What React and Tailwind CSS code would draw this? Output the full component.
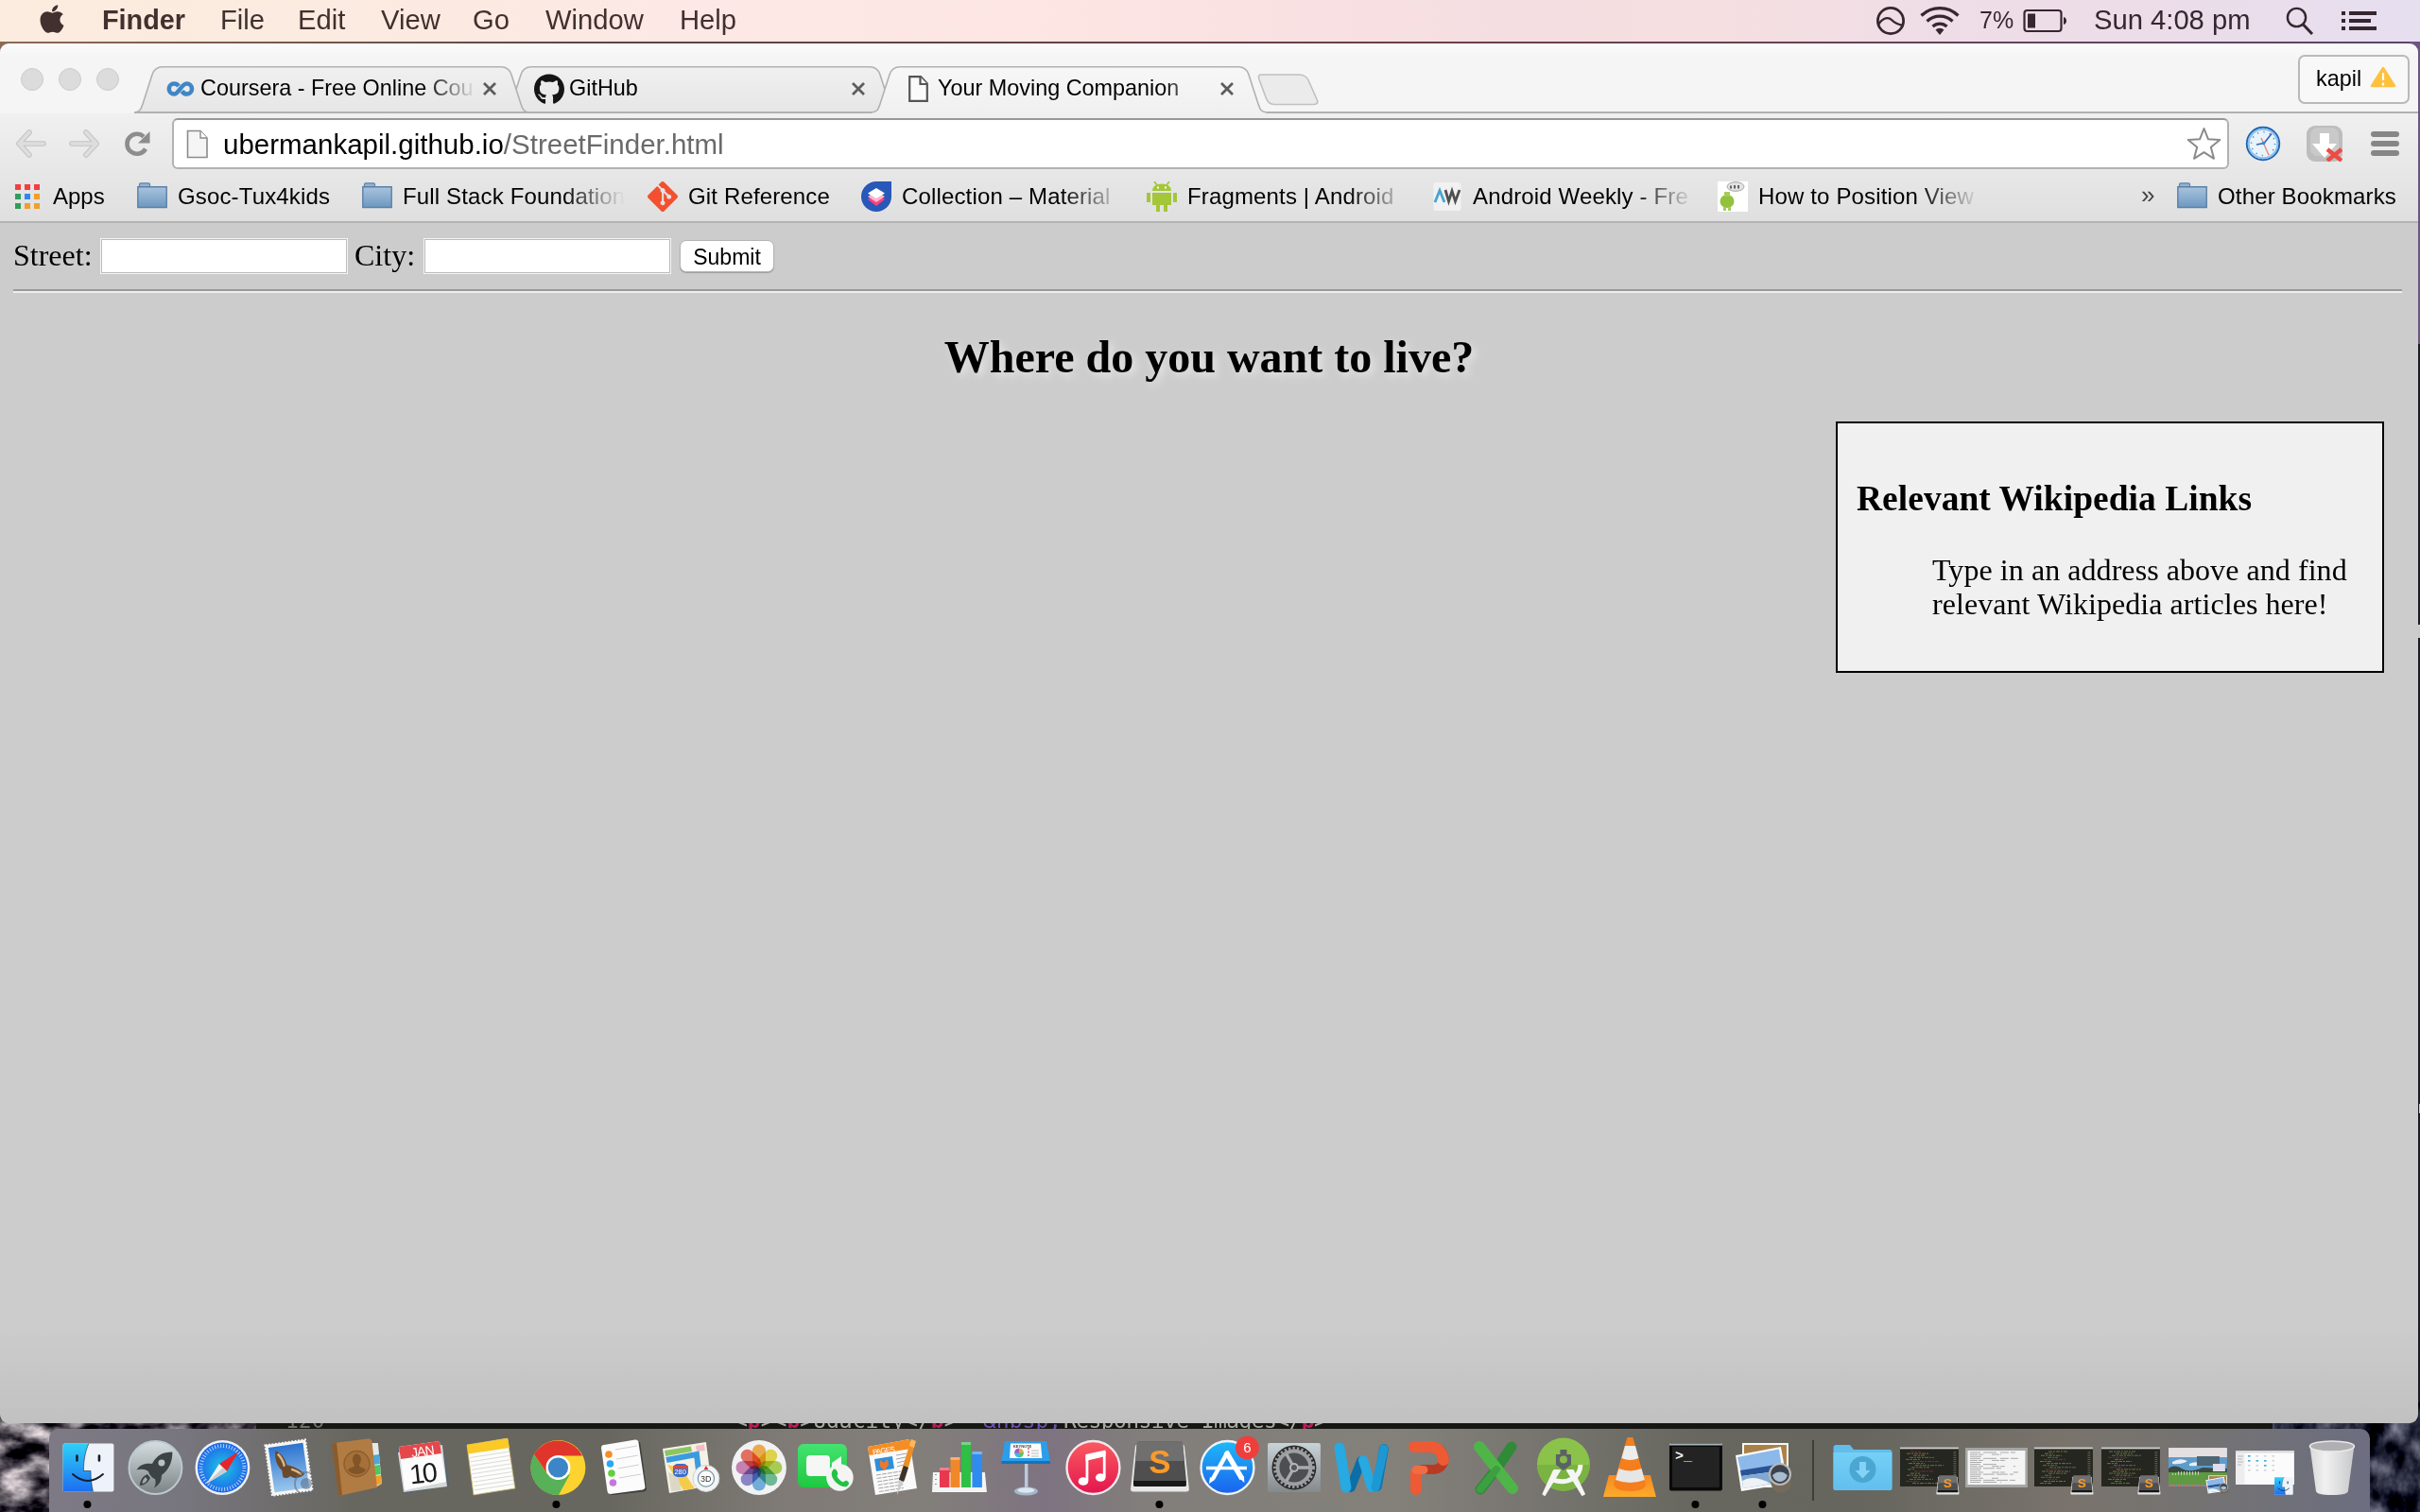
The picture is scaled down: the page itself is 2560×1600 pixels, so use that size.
import React from "react";
import { FaApple, FaGithub } from "react-icons/fa";
import { SiGit } from "react-icons/si";

/* ---------- Menu bar ---------- */

function MenuBar() {
  return (
    <header className="flex h-[44px] shrink-0 items-center bg-[linear-gradient(90deg,#fbecdf_0%,#fcebe0_14%,#fde8e6_30%,#fde6e3_42%,#f9e0e2_54%,#f4dee1_64%,#f6dfe0_70%,#efdde6_80%,#ebdde9_90%,#e6dff0_100%)] text-[29.2px] text-[#42302e]">
      <FaApple className="mb-[4px] ml-[39px] h-[34px] w-[32px] shrink-0" />
      <span className="ml-[37px] w-[125px] shrink-0 text-[28.8px] font-bold">Finder</span>
      <span className="w-[82px] shrink-0">File</span>
      <span className="w-[88px] shrink-0">Edit</span>
      <span className="w-[97px] shrink-0">View</span>
      <span className="w-[77px] shrink-0">Go</span>
      <span className="w-[142px] shrink-0">Window</span>
      <span className="shrink-0">Help</span>
      <div className="mr-[46px] ml-auto flex items-center text-[#35262f]">
        <svg className="h-[32px] w-[32px]" viewBox="0 0 32 32" fill="none" stroke="currentColor">
          <circle cx="16" cy="16" r="13.6" strokeWidth="2.8" />
          <path d="M3 20C8 12 14 12 17 15C21 19 24 20 29 21" strokeWidth="2.4" />
        </svg>
        <svg className="ml-[14px] h-[32px] w-[44px]" viewBox="0 0 44 32" fill="none" stroke="currentColor" strokeWidth="3.2">
          <path d="M2.5 10.5a28 28 0 0 1 39 0" />
          <path d="M8.5 16.5a19.5 19.5 0 0 1 27 0" />
          <path d="M14.5 22a11 11 0 0 1 15 0" />
          <path d="M22 31l-4.5-5.5a7 7 0 0 1 9 0z" fill="currentColor" stroke="none" />
        </svg>
        <span className="ml-[20px] w-[38px] text-[25px]">7%</span>
        <svg className="ml-[8px] h-[26px] w-[48px]" viewBox="0 0 48 26">
          <rect x="1.5" y="2" width="39" height="22" rx="3" fill="none" stroke="currentColor" strokeWidth="2.2" />
          <rect x="5" y="5.5" width="8" height="15" fill="currentColor" />
          <path d="M43 9c4 1 4 7 0 8z" fill="currentColor" />
        </svg>
        <span className="ml-[27px] w-[167px] whitespace-nowrap">Sun 4:08 pm</span>
        <svg className="ml-[36px] h-[30px] w-[30px]" viewBox="0 0 30 30" fill="none" stroke="currentColor" strokeWidth="2.4">
          <circle cx="11.5" cy="11.5" r="9.6" />
          <path d="M18 18.5l10 10.5" strokeWidth="3" />
        </svg>
        <svg className="ml-[29px] h-[22px] w-[37px]" viewBox="0 0 37 22" fill="currentColor">
          <path d="M0 1h4v4H0zM8 1h29v4H8zM0 9h4v4H0zM8 9h23v4H8zM0 17h4v4H0zM8 17h29v4H8z" />
        </svg>
      </div>
    </header>
  );
}

/* ---------- Browser chrome ---------- */

const TAB_LINE =
  "M0 49C6 48.500 7 46 9 40L19 9C21 3 24 .8 30 .8H388C394 .8 397 3 399 9L409 40C411 46 412 48.500 418 49";

function Tab({ active, z, icon, label }) {
  return (
    <div className={"relative -ml-[28px] flex h-[50px] w-[418px] shrink-0 items-center pb-[2px] pl-[33px] " + z}>
      <svg className="absolute inset-0 h-[50px] w-[418px]" viewBox="0 0 418 50">
        <defs>
          <linearGradient id={active ? "tabOn" : "tabOff"} x1="0" y1="0" x2="0" y2="1">
            <stop offset="0" stopColor={active ? "#f7f7f7" : "#f0f0f0"} />
            <stop offset="1" stopColor={active ? "#f0f0f0" : "#e6e6e6"} />
          </linearGradient>
        </defs>
        <path d={TAB_LINE + (active ? "V50H0Z" : "Z")} fill={active ? "url(#tabOn)" : "url(#tabOff)"} />
        <path d={TAB_LINE} fill="none" stroke="#b1b1b1" strokeWidth="1.6" />
        {!active && <path d="M0 49H418" stroke="#b1b1b1" strokeWidth="2" />}
      </svg>
      <div className="relative flex h-[32px] w-[32px] items-center justify-center">{icon}</div>
      <span className="relative ml-[5px] w-[292px] overflow-hidden whitespace-nowrap [mask-image:linear-gradient(90deg,#000_81%,transparent_100%)]">
        {label}
      </span>
      <svg className="relative ml-[7px] h-[14px] w-[14px]" viewBox="0 0 14 14" stroke="#5c5c5c" strokeWidth="2.8">
        <path d="M1 1L13 13M13 1L1 13" />
      </svg>
    </div>
  );
}

function CourseraIcon() {
  return (
    <svg className="h-[16px] w-[30px]" viewBox="0 0 30 16" fill="none" stroke="#3f86c6" strokeWidth="4.6">
      <path d="M13 5C11.500 3 10 2.500 8.300 2.500a5.500 5.500 0 0 0 0 11C13 13.500 16 2.500 21.500 2.500a5.500 5.500 0 0 1 0 11C19.500 13.500 18 12.500 16.500 10.500" />
    </svg>
  );
}

function PageIcon() {
  return (
    <svg className="h-[28px] w-[21px]" viewBox="0 0 21 28" fill="#fafafa" stroke="#555" strokeWidth="2.2">
      <path d="M1.200 1.200H13L19.800 8.500V26.800H1.200Z" />
      <path d="M12.500 1.200V9H19.800" />
    </svg>
  );
}

function TabStrip() {
  return (
    <div className="flex h-[74px] shrink-0 items-end rounded-t-[9px] bg-[linear-gradient(#fbfbfb,#f5f5f5_20%)] text-[23.4px]">
      <div className="mb-[24px] ml-[22px] flex gap-[16px]">
        <i className="h-[24px] w-[24px] rounded-full border border-[#cbcbcb] bg-[#dcdcdc]" />
        <i className="h-[24px] w-[24px] rounded-full border border-[#cbcbcb] bg-[#dcdcdc]" />
        <i className="h-[24px] w-[24px] rounded-full border border-[#cbcbcb] bg-[#dcdcdc]" />
      </div>
      <div className="ml-[16px] flex grow border-b-0 bg-[linear-gradient(#b1b1b1,#b1b1b1)] bg-[length:100%_2px] bg-[position:0_48px] bg-no-repeat pl-[28px]">
        <Tab z="z-20" icon={<CourseraIcon />} label="Coursera - Free Online Cou" />
        <Tab z="z-10" icon={<FaGithub className="h-[33px] w-[33px] text-[#151515]" />} label="GitHub" />
        <Tab active z="z-30" icon={<PageIcon />} label="Your Moving Companion" />
        <svg className="mt-[8px] -ml-[10px] h-[34px] w-[66px]" viewBox="0 0 66 34">
          <path d="M4 1H44C50 1 53 3 55 9L63 27C65 31 63 32.500 59 32.500H18C13 32.500 11 30 9 25L2 6C1 3 1 1 4 1Z" fill="#ebebeb" stroke="#c0c0c0" strokeWidth="1.600" />
        </svg>
        <div className="mr-[9px] -mt-[12px] ml-auto flex h-[52px] w-[118px] items-center rounded-[7px] border-2 border-[#b9b9b9] bg-[#f8f8f8] pl-[17px]">
          <span className="w-[50px]">kapil</span>
          <svg className="mb-[5px] ml-[7px] h-[23px] w-[28px]" viewBox="0 0 28 23">
            <path d="M14 2L26 21H2Z" fill="#fdc13d" stroke="#fdc13d" strokeWidth="2.500" strokeLinejoin="round" />
            <path d="M14 7v8M14 17.500v3" stroke="#fff" strokeWidth="2.200" />
          </svg>
        </div>
      </div>
    </div>
  );
}

function Arrow({ flip }) {
  return (
    <svg className={"h-[30px] w-[32px] " + (flip ? "-scale-x-100" : "")} viewBox="0 0 32 30" fill="none" strokeLinejoin="round" strokeLinecap="round">
      <path d="M14 3L3 15L14 27M4 15H29" stroke="#c3c3c3" strokeWidth="5.6" />
      <path d="M14 3L3 15L14 27M4 15H29" stroke="#dedede" strokeWidth="3.600" />
    </svg>
  );
}

function Toolbar() {
  return (
    <div className="flex h-[61px] shrink-0 items-center pb-[1px] pt-[4px]">
      <div className="ml-[17px]"><Arrow /></div>
      <div className="ml-[24px]"><Arrow flip /></div>
      <svg className="ml-[26px] h-[28px] w-[29px]" viewBox="0 0 29 28" fill="none">
        <path d="M23 19.500A10.500 10.500 0 1 1 21 6.500" stroke="#8d8d8d" strokeWidth="4.600" />
        <path d="M27.500 1V13.500H15Z" fill="#8d8d8d" />
      </svg>
      <div className="ml-[22px] flex h-[54px] w-[2176px] items-center rounded-[6px] border-2 border-[#b2b2b2] border-t-[#979797] bg-white pl-[13px] text-[29.5px]">
        <svg className="h-[31px] w-[24px]" viewBox="0 0 24 31">
          <path d="M1.500 1.500H15L22 9V29.500H1.500Z" fill="#f5f5f5" stroke="#8b8b8b" strokeWidth="1.600" />
          <path d="M15 1.500V9H22" fill="#fff" stroke="#8b8b8b" strokeWidth="1.400" />
        </svg>
        <span className="ml-[15px] pt-[2px] text-[#6a6a6a]">
          <span className="text-black">ubermankapil.github.io</span>/StreetFinder.html
        </span>
        <svg className="mr-[6px] ml-auto h-[36px] w-[37px]" viewBox="0 0 37 36">
          <path d="M18.500 2L23 13.300L35.300 14L25.800 21.800L29 33.800L18.500 27.200L8 33.800L11.200 21.800L1.700 14L14 13.300Z" fill="#fff" stroke="#8a8a8a" strokeWidth="2" strokeLinejoin="round" />
        </svg>
      </div>
      <svg className="ml-[17px] h-[38px] w-[38px]" viewBox="0 0 38 38" fill="none">
        <circle cx="19" cy="19" r="17.200" fill="#e8f3fb" stroke="#1e66b4" strokeWidth="2" />
        <circle cx="19" cy="19" r="15.300" stroke="#8fc1ec" strokeWidth="2" />
        <circle cx="19" cy="19" r="12.500" stroke="#4c8ec9" strokeWidth="1.600" strokeDasharray="1.200 5.345" />
        <path d="M12 20L20 18.500L28 8.500" stroke="#3b5fb5" strokeWidth="1.600" />
        <path d="M17 13L25 31" stroke="#f0876c" strokeWidth="1.400" />
        <circle cx="19.500" cy="18.500" r="1.800" fill="#2b8be0" />
      </svg>
      <svg className="ml-[27px] h-[38px] w-[38px]" viewBox="0 0 38 38">
        <rect width="38" height="38" rx="9" fill="#bdbdbd" />
        <rect x="4" y="2" width="30" height="30" rx="8" fill="#c9c9c9" />
        <path d="M14 8H24V19H32L19 34L6 19H14Z" fill="#fff" />
        <path d="M22 25L37 37M37 25L22 37" stroke="#ee4b45" strokeWidth="4.500" />
      </svg>
      <div className="ml-[30px] flex flex-col gap-[4px]">
        <i className="h-[6px] w-[30px] rounded-full bg-[#868686]" />
        <i className="h-[6px] w-[30px] rounded-full bg-[#868686]" />
        <i className="h-[6px] w-[30px] rounded-full bg-[#868686]" />
      </div>
    </div>
  );
}

function FolderIcon() {
  return (
    <svg className="mb-[2px] h-[28px] w-[32px] shrink-0" viewBox="0 0 32 28">
      <defs>
        <linearGradient id="folder" x1="0" y1="0" x2="0" y2="1">
          <stop offset="0" stopColor="#a9c3de" />
          <stop offset="1" stopColor="#6d98c0" />
        </linearGradient>
      </defs>
      <path d="M2.500 5V2Q2.500 .8 4 .8H12Q13.500 .8 13.500 2V5" fill="#93b3d3" stroke="#5f83a8" strokeWidth="1.200" />
      <path d="M.8 4.800H31.200V26.500H.8Z" fill="url(#folder)" stroke="#5b80a6" strokeWidth="1.400" />
    </svg>
  );
}

const APP_DOTS = ["#f23f3f", "#f23f3f", "#f23f3f", "#2f9e5b", "#2f87f0", "#efa02a", "#2f9e5b", "#efa02a", "#efa02a"];

function Bookmark({ icon, label, width, fade }) {
  return (
    <div className={"flex shrink-0 items-center gap-[11px] " + width}>
      {icon}
      <span
        className={
          "pt-[1px] whitespace-nowrap tracking-[0.15px] " +
          (fade ? "w-[242px] [mask-image:linear-gradient(90deg,#000_70%,transparent_97%)]" : "")
        }
      >
        {label}
      </span>
    </div>
  );
}

function MaterialUpIcon() {
  return (
    <svg className="h-[32px] w-[32px] shrink-0" viewBox="0 0 32 32">
      <path d="M16 0H32V16A16 16 0 1 1 16 0Z" fill="#2858b8" />
      <path d="M16 13L25 19L16 26L7 19Z" fill="#ff4081" />
      <path d="M16 10L25 16L16 22L7 16Z" fill="#ffb3cd" />
      <path d="M16 7L25 12.500L16 18L7 12.500Z" fill="#fff" />
    </svg>
  );
}

function AndroidIcon() {
  return (
    <svg className="h-[32px] w-[32px] shrink-0" viewBox="0 0 32 32" fill="#a4c639">
      <path d="M8 0l3 4M24 0l-3 4" stroke="#a4c639" strokeWidth="1.800" />
      <path d="M6 10Q6.500 2.500 16 2.500T26 10Z" />
      <path d="M6 12H26V25H6ZM0 12H4V22H0ZM28 12H32V22H28ZM10 25H14V32H10ZM18 25H22V32H18Z" />
      <path d="M11 5.500h2v2h-2zM19 5.500h2v2h-2z" fill="#fff" />
    </svg>
  );
}

function AndroidWeeklyIcon() {
  return (
    <svg className="h-[32px] w-[32px] shrink-0" viewBox="0 0 32 32">
      <rect x="1.500" y="1" width="29" height="30" rx="2" fill="#f1f1f1" />
      <g fill="none" strokeWidth="2.800">
        <path d="M3 22L8 9.500L13 22" stroke="#46a5cf" />
        <path d="M14 9L17.500 21L21 10L24.500 21L29 9" stroke="#505050" />
      </g>
    </svg>
  );
}

function RobotIcon() {
  return (
    <svg className="h-[32px] w-[32px] shrink-0" viewBox="0 0 32 32">
      <rect width="32" height="32" fill="#fff" />
      <ellipse cx="10" cy="21" rx="7.500" ry="7" fill="#93c13d" />
      <path d="M7 11h6v5H7zM6 27h3v4H6zM11 27h3v4h-3z" fill="#a5cd5c" />
      <ellipse cx="19" cy="5.500" rx="9" ry="4.800" fill="#e2e2e2" stroke="#a4a4a4" />
      <path d="M14 4.500v3M18 4v3.500M22 4v3.500" stroke="#555" strokeWidth="1.800" />
    </svg>
  );
}

function BookmarksBar() {
  return (
    <div className="flex h-[55px] shrink-0 items-center border-b-2 border-[#b3b3b3] pl-[16px] text-[24px]">
      <div className="flex w-[129px] shrink-0 items-center">
        <div className="grid grid-cols-3 gap-[4px]">
          {APP_DOTS.map((c, i) => (
            <i key={i} className="h-[6px] w-[6px]" style={{ background: c }} />
          ))}
        </div>
        <span className="ml-[14px] pt-[1px]">Apps</span>
      </div>
      <Bookmark width="w-[238px]" icon={<FolderIcon />} label="Gsoc-Tux4kids" />
      <Bookmark width="w-[302px]" fade icon={<FolderIcon />} label="Full Stack Foundation" />
      <Bookmark width="w-[226px]" icon={<SiGit className="h-[32px] w-[32px] shrink-0 text-[#f4502f]" />} label="Git Reference" />
      <Bookmark width="w-[302px]" fade icon={<MaterialUpIcon />} label="Collection – Material" />
      <Bookmark width="w-[302px]" fade icon={<AndroidIcon />} label="Fragments | Android" />
      <Bookmark width="w-[302px]" fade icon={<AndroidWeeklyIcon />} label="Android Weekly - Fre" />
      <Bookmark width="w-[302px]" fade icon={<RobotIcon />} label="How to Position View" />
      <span className="ml-auto w-[38px] shrink-0 pb-[3px] text-[26px] text-[#444]">»</span>
      <Bookmark width="w-[255px]" icon={<FolderIcon />} label="Other Bookmarks" />
    </div>
  );
}

/* ---------- Web page ---------- */

function Field() {
  return <input className="h-[38px] w-[262px] border border-[#f4f4f4] bg-white shadow-[inset_0_0_0_1px_#bcbcbc]" />;
}

function StreetFinder() {
  return (
    <main className="flex grow flex-col rounded-b-[9px] bg-[linear-gradient(#cccccc_0,#cccccc_92%,#c1c1c1_100%)] pt-[16px] font-['Liberation_Serif',serif] text-[32px] text-black">
      <form className="flex h-[38px] items-center pl-[14px]">
        <label className="w-[92px] pb-[3px] leading-[36px]">Street:</label>
        <Field />
        <label className="ml-[7px] w-[73px] pb-[3px] leading-[36px]">City:</label>
        <Field />
        <button type="button" className="ml-[9px] h-[34px] w-[100px] rounded-[7px] border border-[#b5b5b5] bg-white font-['Liberation_Sans',sans-serif] text-[23px] leading-[35px] shadow-[0_1px_1px_#9c9c9c]">
          Submit
        </button>
      </form>
      <hr className="mt-[16px] mr-[17px] ml-[14px] h-[4px] border-t-2 border-b-2 border-t-[#9a9a9a] border-b-[#eeeeee]" />
      <h1 className="mt-[40px] text-center text-[48px] leading-[56px] font-bold [text-shadow:4px_4px_8px_#e6e6e6]">
        Where do you want to live?
      </h1>
      <section className="mt-[40px] mr-[36px] ml-auto h-[266px] w-[580px] border-2 border-black bg-[#f0f0f0] px-[20px] pt-[59px]">
        <h3 className="text-[37.44px] leading-[42px] font-bold tracking-[0.06px]">Relevant Wikipedia Links</h3>
        <p className="mt-[36px] ml-[80px] leading-[36px] tracking-[0.06px] whitespace-nowrap">
          Type in an address above and find
          <br />
          relevant Wikipedia articles here!
        </p>
      </section>
    </main>
  );
}

/* ---------- Dock icons ---------- */

function Grad({ id, a, b }) {
  return (
    <linearGradient id={id} x1="0" y1="0" x2="0" y2="1">
      <stop offset="0" stopColor={a} />
      <stop offset="1" stopColor={b} />
    </linearGradient>
  );
}

const range = (n) => Array.from({ length: n }, (_, i) => i);

const Finder = (
  <>
    <Grad id="fi" a="#2fd0f8" b="#1d6ef0" />
    <rect x="9.500" y="15.500" width="54" height="51" rx="2" fill="#eef3f9" />
    <path d="M11.500 15.500H37C33 24 31.500 34 31.500 44.500H39C39 52 40 60 41.500 66.500H11.500Q9.500 66.500 9.500 64.500V17.500Q9.500 15.500 11.500 15.500Z" fill="url(#fi)" />
    <path d="M24.500 28.500v5M48 28.500v5" stroke="#15202c" strokeWidth="2.600" strokeLinecap="round" />
    <path d="M37 15.500C33 24 31.500 34 31.500 44.500H39C39 52 40 60 41.500 66.500" fill="none" stroke="#1b2c3e" strokeWidth="1" opacity=".6" />
    <path d="M20 48Q36 62 52 48" fill="none" stroke="#15202c" strokeWidth="2" strokeLinecap="round" />
  </>
);

const Launchpad = (
  <>
    <Grad id="lp" a="#d5dfe2" b="#7c8284" />
    <circle cx="36.500" cy="41" r="28" fill="url(#lp)" stroke="#bcc9ce" strokeWidth="2" />
    <path d="M54.500 24.500C44 24.500 38 28 33 37C25 36 20 38 16.500 43.500C22 42 26 43 29 45C30 49 33 52 36 53C37 56 37 59 35 62.500C41 59 43 55 43 49C50 44 54.500 36 54.500 24.500Z" fill="#3d4245" />
    <circle cx="43" cy="36" r="3.500" fill="#b8c1c4" />
    <path d="M28 48C23 50 20 55 20 60C24 60 29 57 31 52Z" fill="#3d4245" />
    <path d="M26 51C24 53 22.500 55 22.500 58C25 57.500 27 56 28 53.500Z" fill="#a2a9ab" />
  </>
);

const Safari = (
  <>
    <radialGradient id="sf2">
      <stop offset="0" stopColor="#1fc8e2" />
      <stop offset="1" stopColor="#1d66ec" />
    </radialGradient>
    <circle cx="36.500" cy="41" r="29" fill="#eef2f5" />
    <circle cx="36.500" cy="41" r="26.500" fill="url(#sf2)" />
    <circle cx="36.500" cy="41" r="23" fill="none" stroke="#dff1ff" strokeWidth="4" strokeDasharray="1 2.011" opacity=".8" />
    <path d="M53.500 24L41 45L33 37Z" fill="#e8242d" />
    <path d="M19.500 58L33 37L41 45Z" fill="#f2f2f2" />
    <path d="M19.500 58L37 41L41 45Z" fill="#c9cdd1" />
  </>
);

const Mail = (
  <>
    <Grad id="ml" a="#2d73cf" b="#9ac7ec" />
    <g transform="rotate(-8 36 41)">
      <rect x="14" y="14" width="43" height="54" fill="#f6f6f3" stroke="#f6f6f3" strokeWidth="2" strokeDasharray="2 1.500" />
      <rect x="17" y="17" width="37" height="48" fill="url(#ml)" />
      <path d="M24 21C30 25 33 30 34 38C40 40 47 44 51 50C47 54 40 54 36 50C33 52 30 52 28 50C28 47 28 45 28 43C23 37 22 29 24 21Z" fill="#6b4a2b" />
      <path d="M26 25C29 29 31 33 31 39M38 43C42 45 45 47 48 50" stroke="#d9b98d" strokeWidth="2.400" fill="none" />
    </g>
    <circle cx="54" cy="58" r="12" fill="none" stroke="#636a7c" strokeWidth="2" opacity=".55" />
    <circle cx="54" cy="58" r="6" fill="#4f617e" opacity=".5" />
  </>
);

const Contacts = (
  <>
    <path d="M52 15L59 15L63 58L56 62Z" fill="#e6e9e6" />
    <path d="M53 28L60 27L61 37L54 38Z" fill="#49a8dc" />
    <path d="M54 39L61 38L62 48L55 49Z" fill="#4dc95d" />
    <path d="M55 50L62 49L63 58L56 60Z" fill="#f2a127" />
    <path d="M11 15L49 10.500Q52 10 52.500 13L58 62L17 71Z" fill="#b17c43" />
    <path d="M10 16L15 14L21 70L17 71Z" fill="#8a5c2d" />
    <circle cx="36.500" cy="37" r="13.500" fill="#a57139" stroke="#8d5e2e" strokeWidth="1.400" />
    <path d="M32 32a4.500 5.500 0 0 1 9 0c0 4-2 5-2 7 1 2 6 2 7 5a13 13 0 0 1-19 0c1-3 6-3 7-5 0-2-2-3-2-7z" fill="#825528" />
  </>
);

const Calendar = (
  <>
    <path d="M9 21L57 16L65 60L16 69Z" fill="#56666f" />
    <path d="M10 25L16 67L62 61L57 17Z" fill="#d5d8da" />
    <path d="M11 19L54 13L61 56L17 65Z" fill="#fcfcfc" />
    <path d="M11 19L54 13L56 26L13 32Z" fill="#e5484b" />
    <text x="24" y="29" fontSize="14" fill="#fff" transform="rotate(-8 33 24)" letterSpacing="-.8">JAN</text>
    <text x="22" y="57" fontSize="29" fill="#1b1b1b" transform="rotate(-6 36 46)" letterSpacing="-2.500">10</text>
  </>
);

const Notes = (
  <>
    <path d="M12 17L55 10L63 63L19 70Z" fill="#fdfdfb" stroke="#c9b468" strokeWidth=".8" />
    <path d="M12 17L55 10L57 20L13.500 26.500Z" fill="#fbc928" />
    {range(9).map((i) => (
      <path key={i} d={`M${15 + i * 0.6} ${30.500 + i * 4.300}L${57 + i * 0.6} ${24 + i * 4.300}`} stroke="#d5d5d3" strokeWidth=".9" />
    ))}
  </>
);

const Chrome = (
  <>
    <circle cx="37.500" cy="41" r="29" fill="#fdd32f" />
    <path d="M37.500 54L50 48L38 70A29 29 0 0 1 12 27L26 48Z" fill="#56b158" />
    <path d="M63 28.500H37.500L25 46L12 27A29 29 0 0 1 63 28.500Z" fill="#e0352b" />
    <circle cx="37.500" cy="41" r="13" fill="#fff" />
    <circle cx="37.500" cy="41" r="10.600" fill="#3c85c6" />
  </>
);

const Reminders = (
  <>
    <path d="M15 19L50 13Q53 13 53.500 16L60 63Q60 66 57 66.500L24 70Q21 70 20.500 67L13 22Z" fill="#2c2c2c" opacity=".7" />
    <path d="M15 17L48 11.500Q51 11 51.500 14L58.500 61Q59 64 56 64.500L22 69Q19 69 18.500 66L12 20Q12 17.500 15 17Z" fill="#fcfcfc" />
    <circle cx="20" cy="27" r="3.800" fill="#f98c25" />
    <circle cx="21.500" cy="37" r="3.800" fill="#28a9ef" />
    <circle cx="23" cy="47" r="3.800" fill="#62cf3b" />
    <circle cx="24.500" cy="57" r="3.800" fill="#c576dd" />
    <path d="M27 22L50 18M28 32L51 28M30 42L52 38M31 52L54 48" stroke="#cfcfcf" strokeWidth="1" />
  </>
);

const Maps = (
  <>
    <path d="M6 21L52 14L58 60L13 68Z" fill="#f4f1e6" />
    <path d="M8 23L36 18.500L37 24L9 29Z" fill="#8cc663" />
    <path d="M41 18L50 16.500L51 23L42 24Z" fill="#f3bec6" />
    <path d="M10 33L42 27L46 60" fill="none" stroke="#3b9be0" strokeWidth="6" />
    <path d="M11 38L26 42L40 63L28 65Z" fill="#f4cc4b" />
    <path d="M12 46L22 50L26 65L15 66Z" fill="#dcd8c6" />
    <rect x="17" y="37" width="16" height="14" rx="5" fill="#3b6fc9" />
    <path d="M17 39h16v3H17z" fill="#e0463f" />
    <text x="18.500" y="48.500" fontSize="7.500" fill="#fff">280</text>
    <circle cx="52" cy="52.500" r="14" fill="#f3f4f5" stroke="#d0d0d0" />
    <circle cx="52" cy="52.500" r="8.600" fill="#fff" stroke="#7192a5" strokeWidth="1.200" />
    <text x="46" y="56" fontSize="9" fill="#333">3D</text>
    <path d="M52 39l2.500 4h-5z" fill="#e2332c" />
  </>
);

const PETALS = ["#f7a632", "#e8d92c", "#a6cf3d", "#5bb98a", "#5fa9e0", "#8079c4", "#c873ae", "#ef5b4c"];

const Photos = (
  <>
    <circle cx="37" cy="41" r="29" fill="#f1f2f3" />
    {PETALS.map((c, i) => (
      <rect key={c} x="30" y="16.500" width="14" height="24.500" rx="7" fill={c} opacity=".85" transform={`rotate(${i * 45} 37 41)`} style={{ mixBlendMode: "multiply" }} />
    ))}
  </>
);

const FaceTime = (
  <>
    <Grad id="ft" a="#43e36f" b="#1fc841" />
    <rect x="7" y="16" width="52" height="46" rx="6" fill="url(#ft)" />
    <rect x="16" y="28" width="25" height="22" rx="4" fill="#f5f7f5" />
    <path d="M43 36L53 29V49L43 43Z" fill="#f5f7f5" />
    <circle cx="51.500" cy="51.500" r="14.300" fill="#f3f4f3" />
    <path d="M44 44c2-3 4-1 5 2s-1 3 0 5 3 4 5 5 3-2 5-1 3 3 1 5-6 2-11-2-8-10-5-14z" fill="#23c245" />
  </>
);

const Pages = (
  <>
    <path d="M10 19L54 11L62 63L18 70Z" fill="#fafafa" />
    <path d="M10 19L54 11L56 21L11.500 28Z" fill="#f68d22" />
    <text x="15" y="26" fontSize="8" fill="#fff" transform="rotate(-8 25 23)" letterSpacing="-.8">PAGES</text>
    <path d="M17 32L36 29L38 42L19 45Z" fill="#2d8fdb" />
    <path d="M23 33l4 3 4-4 1 6-4 6-5-4z" fill="#f1772a" />
    {range(6).map((i) => (
      <path key={i} d={`M${19 + i * 0.6} ${49 + i * 3.500}L${45 + i * 0.6} ${45 + i * 3.500}`} stroke="#a5a5a5" strokeWidth="1" strokeDasharray="5 1" />
    ))}
    <path d="M40 28L51 26M40 32L50 30M41 36L49 34M41 40L48 38" stroke="#a5a5a5" />
    <path d="M56 11L61 13L49 55L43 53Z" fill="#ee8f25" />
    <path d="M48 39L53 41L48 56L43 54Z" fill="#333" />
    <path d="M43 54L48 56L41 70Z" fill="#c9ccd0" />
    <path d="M56 11L61 13L59 20L54 18Z" fill="#f7b85f" />
  </>
);

const Numbers = (
  <>
    <path d="M8 46H63L65 67H7Z" fill="#f4f4f4" />
    <rect x="15" y="41" width="10.500" height="21" fill="#e8384f" />
    <rect x="26.500" y="30" width="10" height="32" fill="#f0882a" />
    <rect x="38" y="14" width="10" height="48" fill="#2dbf46" />
    <rect x="49.500" y="24" width="10.500" height="38" fill="#2e8cf0" />
    <path d="M15 41h10.500v3H15zM26.500 30h10v3h-10zM38 14h10v3H38zM49.500 24H60v3H49.500z" fill="#fff" opacity=".35" />
    <path d="M11 48v14" stroke="#999" strokeDasharray="1 4" strokeWidth="2" />
  </>
);

const Keynote = (
  <>
    <path d="M35 37H38.500V64H35Z" fill="#b9cbdc" />
    <ellipse cx="36.500" cy="66" rx="12.500" ry="4.500" fill="#a4b7ca" />
    <ellipse cx="36.500" cy="65" rx="9" ry="2.800" fill="#dbe6f0" />
    <path d="M14 13H58L62 34H10.500Z" fill="#2b9ee9" />
    <path d="M10.500 34H62V37H10.500Z" fill="#1672bb" />
    <path d="M20 15.500H52L53.500 31H19Z" fill="#fcfcfc" />
    <text x="23" y="20" fontSize="4" fontWeight="bold" fill="#444">KEYNOTE</text>
    <circle cx="29" cy="25.500" r="4.800" fill="#43b6e5" />
    <path d="M29 25.500V20.700A4.800 4.800 0 0 1 33.800 25.500Z" fill="#f2a53a" />
    <path d="M29 25.500L24.200 25.500A4.800 4.800 0 0 1 29 20.700Z" fill="#b84fc0" />
    <path d="M29 25.500V30.300A4.800 4.800 0 0 0 33.800 25.500Z" fill="#5ac65e" />
    <path d="M39 20v10" stroke="#d2566a" strokeWidth="1.400" strokeDasharray="2 1.500" />
    <path d="M42 23h8M42 26h8M42 29h8" stroke="#aaa" strokeWidth=".8" />
  </>
);

const ITunes = (
  <>
    <Grad id="it" a="#fb5b60" b="#e3154e" />
    <circle cx="36.500" cy="41" r="28" fill="url(#it)" stroke="#f2e9ec" strokeWidth="2.400" />
    <path d="M28.500 27L49.500 22.500V29L28.500 34Z" fill="#fff" />
    <path d="M30 28V55M48.300 24V51" stroke="#fff" strokeWidth="2.800" />
    <ellipse cx="26" cy="55.500" rx="5.300" ry="4.300" fill="#fff" />
    <ellipse cx="44.300" cy="51.500" rx="5.300" ry="4.300" fill="#fff" />
  </>
);

function SublimeGlyph() {
  return (
    <>
      <path d="M10 18L14 14H58L62 18L67 64Q67 66.500 64 66.500H8Q5 66.500 5 64Z" fill="#e6e6e6" />
      <path d="M14 13.500H58Q60 13.500 60.300 16L64 55H8L11.700 16Q12 13.500 14 13.500Z" fill="#4f4f4f" />
      <path d="M14 13.500H58Q60 13.500 60.300 16L62 34H10L11.700 16Q12 13.500 14 13.500Z" fill="#6f6f6f" />
      <path d="M8 55H64V60Q64 61 62 61H10Q8 61 8 60Z" fill="#161616" />
      <text x="36" y="47" textAnchor="middle" fontSize="35" fontWeight="bold" fill="#fa9a28">S</text>
    </>
  );
}

const AppStore = (
  <>
    <Grad id="as" a="#1fb9f8" b="#1a62ee" />
    <circle cx="36.500" cy="41" r="28" fill="url(#as)" stroke="#eef3f8" strokeWidth="2.400" />
    <g stroke="#fff" fill="none">
      <path d="M37 24L21 53" strokeWidth="4.500" />
      <path d="M35 24L52 53" strokeWidth="5.500" />
      <path d="M14 41.500H57" strokeWidth="3.600" />
    </g>
    <path d="M18 51L23 54L17 58Z" fill="#fff" />
    <path d="M49 52L54 50L54.500 57Z" fill="#fff" />
    <circle cx="57.500" cy="20" r="12.500" fill="#f03e3c" />
    <text x="57.500" y="25.300" fontSize="15" textAnchor="middle" fill="#fff">6</text>
  </>
);

const SysPrefs = (
  <>
    <Grad id="sp" a="#c8d3d8" b="#84898c" />
    <rect x="8" y="15" width="56" height="52" rx="2" fill="url(#sp)" />
    <circle cx="36" cy="41" r="23.500" fill="#2c2c2c" />
    <circle cx="36" cy="41" r="17" fill="#4c4e50" />
    <circle cx="36" cy="41" r="17.500" fill="none" stroke="#9da0a2" strokeWidth="4" />
    <circle cx="36" cy="41" r="20.500" fill="none" stroke="#9da0a2" strokeWidth="3" strokeDasharray="2.200 2.303" />
    <path d="M36 41L52 41M36 41L28 27M36 41L28 55" stroke="#a8abad" strokeWidth="3.400" />
    <circle cx="36" cy="41" r="4" fill="#55585a" stroke="#b3b6b8" strokeWidth="2" />
  </>
);

const Word = (
  <g fill="none" strokeLinecap="round" strokeLinejoin="round">
    <path d="M60 21L53 61" stroke="#0f78b2" strokeWidth="10" />
    <path d="M36 34L25 62" stroke="#0c6ea6" strokeWidth="10" />
    <path d="M13 20L20 62" stroke="#27a9e1" strokeWidth="11" />
    <path d="M38 33L47 62" stroke="#27a9e1" strokeWidth="10" />
    <path d="M60 21L51 62" stroke="#1d98d3" strokeWidth="9" />
  </g>
);

const PowerPoint = (
  <g fill="none" strokeLinecap="round" strokeLinejoin="round">
    <path d="M24 19H42C56 22 56 42 42 43H30" stroke="#b93a22" strokeWidth="10" />
    <path d="M21 19H38C46 19 51 25 52 33" stroke="#ee5a33" strokeWidth="12" />
    <path d="M23 46V64" stroke="#ee5a33" strokeWidth="12" />
    <path d="M23 43.500H31" stroke="#f16b43" strokeWidth="9" />
  </g>
);

const Excel = (
  <g fill="none" strokeLinecap="round">
    <path d="M53 19L36 44L20 64" stroke="#2f8b37" strokeWidth="11" />
    <path d="M19 19L54 63" stroke="#4fb548" strokeWidth="12" />
    <path d="M37 43L20 64" stroke="#3da040" strokeWidth="8" />
  </g>
);

const AndroidStudio = (
  <>
    <circle cx="37" cy="37.500" r="28" fill="#8bc34a" />
    <path d="M9 38a28 28 0 0 0 56 0z" fill="#7ab342" />
    <path d="M33 44L17 70L15.500 69L27 44ZM41 44L57 70L59 69L47 44Z" fill="#f5f5f5" stroke="#f5f5f5" strokeWidth="2" strokeLinejoin="round" />
    <path d="M25 54C43 60 55 50 55 38" fill="none" stroke="#f5f5f5" strokeWidth="5" />
    <path d="M33.500 22H40.500V27H45V38L37 44L29 38V27H33.500Z" fill="#5c6166" />
    <circle cx="37" cy="32.500" r="4" fill="#86b84c" />
  </>
);

const Vlc = (
  <>
    <Grad id="vl" a="#f58a1f" b="#fbab2c" />
    <path d="M15 49H59L65 72H9Z" fill="url(#vl)" />
    <path d="M34.500 9H40.500L54 58Q54 66 37.500 66T20 58Z" fill="#f47f1c" />
    <path d="M32 18H43L46.500 31Q37.500 35 28.500 31Z" fill="#ededed" />
    <path d="M25.500 42Q37.500 47 49.500 42L53 54Q37.500 60 22 54Z" fill="#e6e6e6" />
  </>
);

const Terminal = (
  <>
    <rect x="8" y="15.500" width="56" height="50" rx="2" fill="#0a0a0a" />
    <path d="M8 15.500h56v2H8z" fill="#a7b4b8" />
    <rect x="11" y="19" width="50" height="43" fill="#232323" />
    <text x="14" y="33" fontSize="15" fontWeight="bold" fill="#f2f2f2" fontFamily="Liberation Mono, monospace">&gt;_</text>
  </>
);

function PreviewGlyph() {
  return (
    <>
      <path d="M14 15H63V62H14Z" fill="#f7f7f5" />
      <path d="M16 17H61V60H16Z" fill="#a98148" />
      <path d="M7 28L55 19L62 58L13 66Z" fill="#fafafa" />
      <path d="M9 30L53 21.500L56 41L13 47Z" fill="#8cb9ea" />
      <path d="M12 44L56 37L57 44L13 50Z" fill="#2a5396" />
      <path d="M13 50L57 44L59 56L15 63Z" fill="#7fa9d0" />
      <path d="M14 55Q26 48 44 58L15 63Z" fill="#eef2f5" />
      <path d="M42.500 48L65.500 48L66 60Q62 68 55 68Q48 68 45 60Z" fill="#75695a" />
      <circle cx="54" cy="48" r="11" fill="#3b4350" stroke="#b8b8b6" strokeWidth="2.200" />
      <path d="M46 49Q54 42 62 49Q60 56 54 56T46 49Z" fill="#a8bccd" />
    </>
  );
}

const Downloads = (
  <>
    <Grad id="dl" a="#74d0f6" b="#62bfee" />
    <path d="M4.500 20Q4.500 17 7.500 17H22L26 22H64Q66.500 22 66.500 25V63Q66.500 65 64.500 65H6.500Q4.500 65 4.500 63Z" fill="#62bdea" />
    <path d="M4.500 25H66.500V63Q66.500 65 64.500 65H6.500Q4.500 65 4.500 63Z" fill="url(#dl)" />
    <circle cx="35.500" cy="43" r="14" fill="#4ba6d2" />
    <path d="M32 35H39V44H43.500L35.500 52.500L27.500 44H32Z" fill="#82d3f6" />
  </>
);

const CODE_COLORS = ["#7c9a2c", "#a02c5a", "#8d8a78", "#5d8d97", "#9c8f4a"];

function CodeShot({ seed }) {
  return (
    <>
      <rect x="4" y="20" width="62" height="41" fill="#25261f" />
      <rect x="4" y="19.500" width="62" height="1.800" fill="#cfcfcf" />
      {range(17).map((i) => {
        const a = (i * 7 + seed * 5) % 11;
        const w = 8 + ((i * 13 + seed * 3) % 24);
        return (
          <path key={i} d={`M${10 + a} ${24 + i * 2.100}h${w}`} stroke={CODE_COLORS[(i * 3 + seed) % 5]} strokeWidth="1" strokeDasharray="4 1 2 1" opacity=".7" />
        );
      })}
      <path d="M62 24v34" stroke="#5b5a50" strokeWidth="3" strokeDasharray="1 1" />
      <svg x="42" y="49" width="25" height="21" viewBox="4 12 64 56" preserveAspectRatio="none">
        <SublimeGlyph />
      </svg>
    </>
  );
}

const TextShot = (
  <>
    <rect x="2" y="20" width="66" height="42" fill="#a5a7a6" />
    <rect x="4.500" y="23" width="61" height="36" fill="#f4f4f4" />
    {range(16).map((i) => (
      <path key={i} d={`M7 ${25 + i * 2.100}h${[48, 33, 14, 51, 46, 12, 30][i % 7]}`} stroke="#8a8a8a" strokeWidth=".7" strokeDasharray={["11 3 14 4 9 2", "8 1 5 9", "12 2"][i % 3]} />
    ))}
  </>
);

const PhotoShot = (
  <>
    <rect x="4" y="20" width="62" height="41" fill="#5e9ccb" />
    <rect x="4" y="20" width="62" height="10" fill="#e6dfe2" />
    <path d="M8 35Q16 30 24 34Q18 38 8 37ZM26 37Q34 33 40 38Q34 40 26 39Z" fill="#e7eef4" />
    <path d="M4 42Q10 37 18 42T40 41L66 42V48H4Z" fill="#3b4a42" />
    <path d="M4 46H66V59H4Z" fill="#5f9a42" />
    <path d="M8 48h28M14 46h22" stroke="#e9e6e0" strokeWidth="1.500" strokeDasharray="1 2" />
    <rect x="34" y="29" width="24" height="10" fill="#4e6576" />
    <rect x="51" y="37" width="13" height="8" fill="#dedcec" />
    <path d="M4 60h62" stroke="#c66" strokeWidth="2" strokeDasharray="2 1" />
    <svg x="43" y="49" width="25" height="21" viewBox="6 14 62 56" preserveAspectRatio="none">
      <PreviewGlyph />
    </svg>
  </>
);

const FinderShot = (
  <>
    <rect x="4" y="23" width="62" height="36" fill="#fbfbfb" />
    <path d="M4 23h62v2.500H4z" fill="#dcdcdc" />
    <path d="M4 25.500h9.500V59H4z" fill="#ededf0" />
    <path d="M6 29h6M6 32h5M6 35h6M6 38h4" stroke="#aaa" strokeWidth=".8" />
    {range(16).map((i) => (
      <rect key={i} x={17 + (i % 4) * 8.500} y={28 + Math.floor(i / 4) * 5} width="2.600" height="1.600" fill={[0, 4, 5, 6, 10].includes(i) ? "#3aa8e6" : "#d0d5da"} />
    ))}
    <svg x="45" y="51" width="20" height="19" viewBox="9 15 55 52" preserveAspectRatio="none">
      {Finder}
    </svg>
  </>
);

const Trash = (
  <>
    <linearGradient id="tr" x1="0" x2="1">
      <stop offset="0" stopColor="#d9d9da" />
      <stop offset=".35" stopColor="#f1f1f1" />
      <stop offset="1" stopColor="#c7c8cb" />
    </linearGradient>
    <path d="M12.500 18L19 66Q20 70 36 70T53 66L59.500 18Z" fill="url(#tr)" />
    <ellipse cx="36" cy="18.500" rx="23.500" ry="5.600" fill="#b0b0b3" stroke="#e9e9ea" strokeWidth="1.600" />
  </>
);

const APPS = [
  [Finder, 1], [Launchpad], [Safari], [Mail], [Contacts], [Calendar], [Notes], [Chrome, 1], [Reminders],
  [Maps], [Photos], [FaceTime], [Pages], [Numbers], [Keynote], [ITunes], [<SublimeGlyph key="s" />, 1],
  [AppStore], [SysPrefs], [Word], [PowerPoint], [Excel], [AndroidStudio], [Vlc], [Terminal, 1],
  [<PreviewGlyph key="p" />, 1],
];

const STACKS = [Downloads, <CodeShot key="1" seed={1} />, TextShot, <CodeShot key="2" seed={4} />, <CodeShot key="3" seed={7} />, PhotoShot, FinderShot, Trash];

function DockItem({ children, running }) {
  return (
    <svg className="h-[88px] w-[70.9px] shrink-0" viewBox="0 0 71 88">
      {children}
      {running && <circle cx="35.500" cy="80" r="4" fill="#000" />}
    </svg>
  );
}

function Dock() {
  return (
    <div className="relative ml-[52px] flex h-[88px] w-[2455px] shrink-0 rounded-t-[10px] bg-[linear-gradient(90deg,#7d7a85_0%,#77757d_6%,#68675f_13%,#67675f_24%,#807b77_32%,#827e7a_38%,#7e7381_43%,#827e7b_47%,#83817a_58%,#7e7b76_61%,#67675f_71%,#66665e_78%,#79736c_87%,#757371_92%,#6c6e80_100%)] pl-[5px]">
      {APPS.map(([icon, running], i) => (
        <DockItem key={i} running={running}>{icon}</DockItem>
      ))}
      <div className="flex w-[35px] shrink-0 justify-center pt-[12px]">
        <i className="h-[64px] w-[2px] bg-[#3d3d39]" />
      </div>
      {STACKS.map((icon, i) => (
        <DockItem key={i}>{icon}</DockItem>
      ))}
    </div>
  );
}

/* ---------- Desktop ---------- */

function Wallpaper() {
  return (
    <div className="absolute inset-0 flex items-end bg-[linear-gradient(90deg,#8d6a56_0,#5b4544_25%,#6b3f49_60%,#5a4766_100%)]">
      <svg className="h-[1556px] w-full" viewBox="0 0 2560 1556" preserveAspectRatio="none">
        <defs>
          <filter id="rock" x="0" y="0" width="1" height="1" colorInterpolationFilters="sRGB">
            <feTurbulence type="fractalNoise" baseFrequency="0.03 0.05" numOctaves="4" seed="8" />
            <feColorMatrix values="1.7 0 0 0 -0.50  1.65 0 0 0 -0.50  1.6 0 0 0 -0.44  0 0 0 0 1" />
          </filter>
          <filter id="night" x="0" y="0" width="1" height="1" colorInterpolationFilters="sRGB">
            <feTurbulence type="fractalNoise" baseFrequency="0.04 0.03" numOctaves="4" seed="3" />
            <feColorMatrix values="1.1 0 0 0 -0.40  1.1 0 0 0 -0.39  1.1 0 0 0 -0.32  0 0 0 0 1" />
          </filter>
        </defs>
        <rect x="0" y="1440" width="300" height="116" filter="url(#rock)" />
        <rect x="2400" y="1440" width="160" height="116" filter="url(#night)" />
        <rect x="2550" y="0" width="10" height="320" fill="#6d5583" />
        <rect x="2550" y="320" width="10" height="1120" fill="#191c27" />
        <path d="M2560 617h-2v14h2M2560 1124h-1v10h1" fill="#c9c9cb" />
      </svg>
    </div>
  );
}

function EditorPeek() {
  return (
    <div className="relative ml-[271px] flex h-[6px] w-[2133px] shrink-0 overflow-hidden bg-[#161713] font-['DejaVu_Sans_Mono',monospace] text-[23px] leading-[28px] whitespace-pre text-[#a9a9a3]">
      <span className="-mt-[17px] ml-[31px] w-[475px] shrink-0 text-[#6d6e66]">120</span>
      <span className="-mt-[17px] w-[263px] shrink-0">
        &lt;<b className="text-[#b51d56]">p</b>&gt;&lt;<b className="text-[#b51d56]">b</b>&gt;Udacity&lt;/<b className="text-[#b51d56]">b</b>&gt;
      </span>
      <span className="-mt-[17px] w-[85px] shrink-0 text-[#6f4fb0]">&amp;nbsp;</span>
      <span className="-mt-[17px] shrink-0 tracking-[-0.6px]">
        Responsive Images&lt;/<b className="text-[#b51d56]">p</b>&gt;
      </span>
    </div>
  );
}

export default function App() {
  return (
    <div className="relative flex h-[1600px] w-[2560px] flex-col overflow-hidden font-['Liberation_Sans',sans-serif] text-black">
      <Wallpaper />
      <div className="relative flex h-full flex-col">
        <MenuBar />
        <div className="mt-[2px] flex h-[1460px] w-[2558px] shrink-0 flex-col">
          <TabStrip />
          <div className="flex h-[116px] shrink-0 flex-col bg-[linear-gradient(#f0f0f0,#dfdfdf)]">
            <Toolbar />
            <BookmarksBar />
          </div>
          <StreetFinder />
        </div>
        <EditorPeek />
        <Dock />
      </div>
    </div>
  );
}
